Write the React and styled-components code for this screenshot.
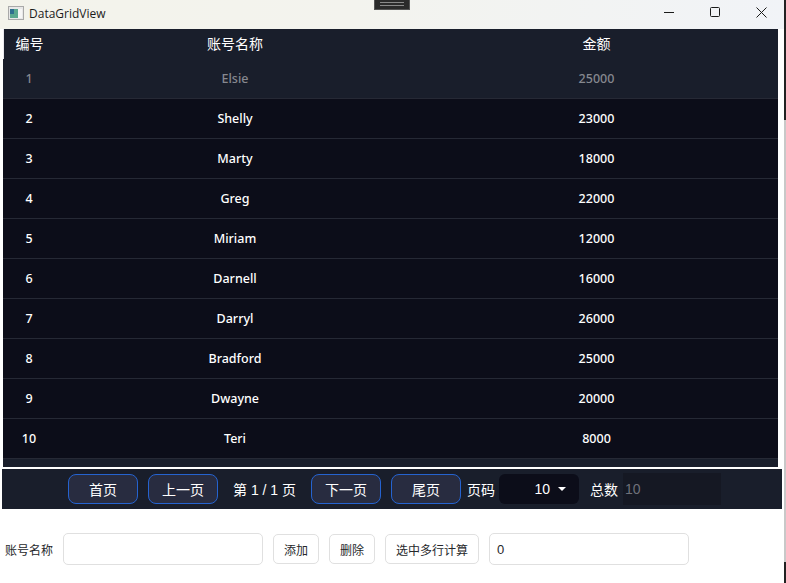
import styled, { createGlobalStyle } from "styled-components";

const GlobalStyle = createGlobalStyle`
  html, body {
    margin: 0;
    padding: 0;
    background: #ffffff;
    overflow: hidden;
  }
  body {
    font-family: "Open Sans", "Noto Sans CJK SC", sans-serif;
  }
`;

const Window = styled.div`
  width: 786px;
  height: 583px;
  position: relative;
  overflow: hidden;
  display: flex;
  flex-direction: column;
`;

const TitleBar = styled.div`
  height: 29px;
  flex: none;
  display: flex;
  align-items: center;
  background: linear-gradient(90deg, #f3f3eb 0%, #f3f3ee 45%, #f1f3f7 100%);
  padding-left: 8px;
  padding-right: 2px;
`;

const AppIcon = styled.svg`
  width: 16px;
  height: 14px;
  margin-right: 5px;
  margin-top: -4px;
`;

const TitleText = styled.span`
  font-family: "Open Sans", "Noto Sans CJK SC", sans-serif;
  font-size: 12px;
  color: #1c1c1c;
  margin-top: -3px;
`;

const WindowButtons = styled.div`
  margin-left: auto;
  display: flex;
  margin-top: -5px;
`;

const WindowButton = styled.div`
  width: 46px;
  height: 24px;
  display: flex;
  align-items: center;
  justify-content: center;
`;

const DragHandle = styled.div`
  position: absolute;
  left: 374px;
  top: 0;
  width: 36px;
  height: 10px;
  box-sizing: border-box;
  background: #2b2b2b;
  border: 1px solid #555;
  border-top: none;
  display: flex;
  flex-direction: column;
  gap: 2px;
  padding: 2px 5px 0;

  &::before,
  &::after {
    content: "";
    height: 1px;
    background: #8a8a8a;
  }
`;

/* sliver of the window behind, showing past the right edge */
const BehindEdge = styled.div`
  position: absolute;
  top: 0;
  right: 0;
  bottom: 0;
  width: 2px;
  background: linear-gradient(
    180deg,
    #222222 0,
    #222222 120px,
    #c8c8c8 120px,
    #c8c8c8 562px,
    #222222 562px
  );
`;

const Grid = styled.div`
  margin: 0 8px 0 3px;
  height: 438px;
  flex: none;
  background: #0c0d19;
  color: #ffffff;
  display: flex;
  flex-direction: column;
`;

const Cols = styled.div`
  display: grid;
  grid-template-columns: 52px 360px 363px;
  align-items: center;
  text-align: center;
`;

const HeaderRow = styled(Cols)`
  grid-template-columns: 51px 360px 363px;
  height: 30px;
  flex: none;
  background: #191e2b;
  border-left: 1px solid #e9e9ef;
  font-family: "Noto Sans CJK SC", sans-serif;
  font-size: 14px;
  font-weight: 400;
  padding-bottom: 2px;
  box-sizing: border-box;
`;

const Row = styled(Cols)`
  height: 40px;
  flex: none;
  box-sizing: border-box;
  font-family: "Noto Sans", "Noto Sans CJK SC", sans-serif;
  font-size: 12.5px;
  font-weight: 500;
  border-bottom: 1px solid #262935;
  background: ${(p) => (p.$active ? "#191e2b" : "#0c0d19")};
  color: ${(p) => (p.$active ? "#86888f" : "#ffffff")};
`;

const GridFoot = styled.div`
  flex: 1;
  background: #191e2b;
`;

const Pager = styled.div`
  margin: 2px 4px 0 2px;
  height: 40px;
  flex: none;
  background: #191e2b;
  display: flex;
  align-items: center;
  padding-left: 66px;
  color: #ffffff;
  font-family: "Liberation Sans", "Noto Sans CJK SC", sans-serif;
  font-size: 14px;
`;

const PageButton = styled.div`
  width: 70px;
  height: 30px;
  box-sizing: border-box;
  border: 1px solid #2563d0;
  border-radius: 8px;
  background: #282c40;
  display: flex;
  align-items: center;
  justify-content: center;
  margin-right: ${(p) => p.$gap || 10}px;
`;

const PageInfo = styled.span`
  margin-right: 15px;
  margin-left: 5px;
  white-space: pre;
`;

const PagerLabel = styled.span`
  margin-right: ${(p) => p.$gap}px;
  margin-left: ${(p) => p.$left || 0}px;
`;

const PageSize = styled.div`
  width: 80px;
  height: 30px;
  background: #0c0d19;
  border-radius: 6px;
  display: flex;
  align-items: center;
  justify-content: flex-end;
  gap: 8px;
  padding-right: 13px;
  box-sizing: border-box;
`;

const Caret = styled.i`
  width: 0;
  height: 0;
  border-left: 4px solid transparent;
  border-right: 4px solid transparent;
  border-top: 4px solid #ffffff;
`;

const TotalField = styled.div`
  width: 98px;
  height: 32px;
  background: #151823;
  color: #6f717a;
  display: flex;
  align-items: center;
  padding-left: 2px;
  box-sizing: border-box;
`;

const Form = styled.div`
  display: flex;
  align-items: center;
  margin-top: 24px;
  padding-left: 5px;
  font-family: "Liberation Sans", "Noto Sans CJK SC", sans-serif;
  font-size: 12px;
  color: #26282b;
`;

const FormLabel = styled.span`
  margin-right: 10px;
`;

const TextBox = styled.div`
  width: 200px;
  height: 32px;
  box-sizing: border-box;
  border: 1px solid #e0e0e0;
  border-radius: 5px;
  background: #ffffff;
  display: flex;
  align-items: center;
  padding-left: 7px;
  margin-right: 10px;
  font-size: 13px;
`;

const FormButton = styled.div`
  height: 30px;
  box-sizing: border-box;
  padding: 0 10px;
  border: 1px solid #e0e0e0;
  border-radius: 5px;
  background: #ffffff;
  display: flex;
  align-items: center;
  margin-right: 10px;
`;

const rows = [
  [1, "Elsie", 25000],
  [2, "Shelly", 23000],
  [3, "Marty", 18000],
  [4, "Greg", 22000],
  [5, "Miriam", 12000],
  [6, "Darnell", 16000],
  [7, "Darryl", 26000],
  [8, "Bradford", 25000],
  [9, "Dwayne", 20000],
  [10, "Teri", 8000],
];

const App = () => {
  return (
    <Window>
      <GlobalStyle />
      <TitleBar>
        <AppIcon viewBox="0 0 16 14">
          <rect x="0.5" y="0.5" width="15" height="13" fill="#e8e8e8" stroke="#a9a9a9" />
          <rect x="2" y="3" width="8" height="9" fill="#5aa88f" />
          <rect x="2" y="3" width="4" height="5" fill="#2f6f8f" />
          <rect x="10" y="3" width="4" height="9" fill="#f6f6f6" />
        </AppIcon>
        <TitleText>DataGridView</TitleText>
        <WindowButtons>
          <WindowButton>
            <svg width="10" height="10" viewBox="0 0 10 10">
              <path d="M0 5.5H10" stroke="#1a1a1a" strokeWidth="1" />
            </svg>
          </WindowButton>
          <WindowButton>
            <svg width="10" height="10" viewBox="0 0 10 10">
              <rect x="0.5" y="0.5" width="9" height="9" rx="1" fill="none" stroke="#1a1a1a" />
            </svg>
          </WindowButton>
          <WindowButton>
            <svg width="11" height="11" viewBox="0 0 11 11">
              <path d="M0.5 0.5L10.5 10.5M10.5 0.5L0.5 10.5" stroke="#1a1a1a" strokeWidth="1" />
            </svg>
          </WindowButton>
        </WindowButtons>
      </TitleBar>
      <DragHandle />
      <BehindEdge />
      <Grid>
        <HeaderRow>
          <span>编号</span>
          <span>账号名称</span>
          <span>金额</span>
        </HeaderRow>
        {rows.map(([id, name, amount], i) => (
          <Row key={id} $active={i === 0}>
            <span>{id}</span>
            <span>{name}</span>
            <span>{amount}</span>
          </Row>
        ))}
        <GridFoot />
      </Grid>
      <Pager>
        <PageButton>首页</PageButton>
        <PageButton>上一页</PageButton>
        <PageInfo>第 1 / 1 页</PageInfo>
        <PageButton>下一页</PageButton>
        <PageButton $gap={5}>尾页</PageButton>
        <PagerLabel $left={1} $gap={4}>页码</PagerLabel>
        <PageSize>
          <span>10</span>
          <Caret />
        </PageSize>
        <PagerLabel $left={11} $gap={5}>总数</PagerLabel>
        <TotalField>10</TotalField>
      </Pager>
      <Form>
        <FormLabel>账号名称</FormLabel>
        <TextBox />
        <FormButton>添加</FormButton>
        <FormButton>删除</FormButton>
        <FormButton>选中多行计算</FormButton>
        <TextBox>0</TextBox>
      </Form>
    </Window>
  );
};

export default App;
